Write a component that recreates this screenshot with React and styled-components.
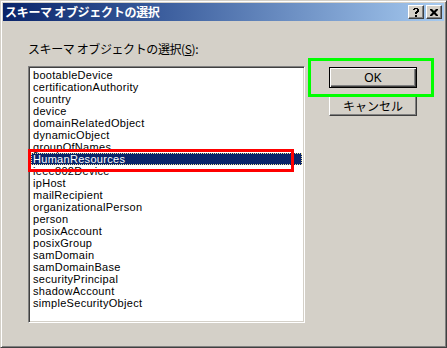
import React from "react";
import styled, { createGlobalStyle } from "styled-components";

const Global = createGlobalStyle`
  html, body { margin: 0; padding: 0; background: #d4d0c8; }
  body { font-family: "Liberation Sans", "Noto Sans CJK JP", sans-serif; }
`;

const Window = styled.div`
  position: relative;
  width: 447px;
  height: 348px;
  box-sizing: border-box;
  background: #d4d0c8;
  border-style: solid;
  border-width: 1px;
  border-color: #d4d0c8 #404040 #404040 #d4d0c8;
  box-shadow: inset 1px 1px 0 #ffffff, inset -1px -1px 0 #808080;
  padding: 2px;
  display: flex;
  flex-direction: column;
  overflow: hidden;
`;

const TitleBar = styled.div`
  height: 18px;
  display: flex;
  align-items: center;
  padding: 0 2px 0 2px;
  background: linear-gradient(to right, #0a246a 0%, #3a5c9c 35%, #a6caf0 100%);
`;

const Title = styled.div`
  flex: 1;
  color: #ffffff;
  font-family: "Noto Sans CJK JP", sans-serif;
  font-weight: bold;
  font-size: 12px;
  line-height: 14px;
  letter-spacing: -0.3px;
`;

const CapButton = styled.div`
  width: 16px;
  height: 14px;
  box-sizing: border-box;
  background: #d4d0c8;
  border-style: solid;
  border-width: 1px;
  border-color: #ffffff #404040 #404040 #ffffff;
  box-shadow: inset -1px -1px 0 #808080;
  margin-left: ${(p) => (p.$gap ? "2px" : "0")};
  display: flex;
  align-items: center;
  justify-content: center;
`;

const Body = styled.div`
  flex: 1;
  display: flex;
  padding: 21px 0 0 25px;
  gap: 24px;
`;

const LeftCol = styled.div`
  display: flex;
  flex-direction: column;
`;

const Label = styled.div`
  font-family: "Noto Sans CJK JP", sans-serif;
  font-size: 12px;
  line-height: 14px;
  height: 14px;
  margin-bottom: 10px;
  color: #000;
  letter-spacing: -0.4px;
  u { text-decoration: underline; }
`;

const ListBox = styled.div`
  width: 277px;
  height: 257px;
  box-sizing: border-box;
  background: #ffffff;
  border-style: solid;
  border-width: 1px;
  border-color: #808080 #ffffff #ffffff #808080;
  box-shadow: inset 1px 1px 0 #404040, inset -1px -1px 0 #d4d0c8;
  padding: 2px 2px;
  overflow: hidden;
`;

const Item = styled.div`
  height: 12px;
  line-height: 12px;
  font-size: 11px;
  font-family: "Liberation Sans", sans-serif;
  padding-left: 2px;
  letter-spacing: 0.3px;
  color: ${(p) => (p.$sel ? "#ffffff" : "#000000")};
  background: ${(p) => (p.$sel ? "#0a246a" : "transparent")};
  outline: ${(p) => (p.$sel ? "1px dotted #e8e0a0" : "none")};
  outline-offset: -1px;
  white-space: nowrap;
`;

const RightCol = styled.div`
  display: flex;
  flex-direction: column;
  gap: 7px;
  padding-top: 25px;
`;

const Button = styled.div`
  width: 88px;
  height: 21px;
  box-sizing: border-box;
  background: #d4d0c8;
  border-style: solid;
  border-width: 1px;
  border-color: ${(p) =>
    p.$default ? "#000000" : "#ffffff #404040 #404040 #ffffff"};
  box-shadow: ${(p) =>
    p.$default
      ? "inset 1px 1px 0 #ffffff, inset -1px -1px 0 #404040, inset -2px -2px 0 #808080"
      : "inset -1px -1px 0 #808080"};
  display: flex;
  align-items: center;
  justify-content: center;
  font-family: "Liberation Sans", "Noto Sans CJK JP", sans-serif;
  font-size: 12px;
  font-weight: normal;
  color: #000;
`;

const Mark = styled.div`
  position: absolute;
  box-sizing: border-box;
  border: 3px solid ${(p) => p.$color};
  left: ${(p) => p.$x}px;
  top: ${(p) => p.$y}px;
  width: ${(p) => p.$w}px;
  height: ${(p) => p.$h}px;
  pointer-events: none;
`;

const items = [
  "bootableDevice",
  "certificationAuthority",
  "country",
  "device",
  "domainRelatedObject",
  "dynamicObject",
  "groupOfNames",
  "HumanResources",
  "ieee802Device",
  "ipHost",
  "mailRecipient",
  "organizationalPerson",
  "person",
  "posixAccount",
  "posixGroup",
  "samDomain",
  "samDomainBase",
  "securityPrincipal",
  "shadowAccount",
  "simpleSecurityObject",
];

export default function App() {
  return (
    <>
      <Global />
      <Window>
        <TitleBar>
          <Title>スキーマ オブジェクトの選択</Title>
          <CapButton>
            <svg width="8" height="9" viewBox="0 0 8 9">
              <path
                d="M1 1h1V0h4v1h1v3H6v1H5v1H3V4h1V3h1V1H3v1H1z M3 7h2v2H3z"
                fill="#000"
              />
            </svg>
          </CapButton>
          <CapButton $gap>
            <svg width="8" height="7" viewBox="0 0 8 7">
              <path
                d="M0 0h2l2 2 2-2h2v1L5.5 3.5 8 6v1H6L4 5 2 7H0V6l2.5-2.5L0 1z"
                fill="#000"
              />
            </svg>
          </CapButton>
        </TitleBar>
        <Body>
          <LeftCol>
            <Label>
              スキーマ オブジェクトの選択(<u>S</u>):
            </Label>
            <ListBox>
              {items.map((t) => (
                <Item key={t} $sel={t === "HumanResources"}>
                  {t}
                </Item>
              ))}
            </ListBox>
          </LeftCol>
          <RightCol>
            <Button $default>OK</Button>
            <Button>キャンセル</Button>
          </RightCol>
        </Body>
        <Mark $color="#ff0000" $x={27} $y={148} $w={266} $h={23} />
        <Mark $color="#00ff00" $x={307} $y={57} $w={126} $h={39} />
      </Window>
    </>
  );
}
